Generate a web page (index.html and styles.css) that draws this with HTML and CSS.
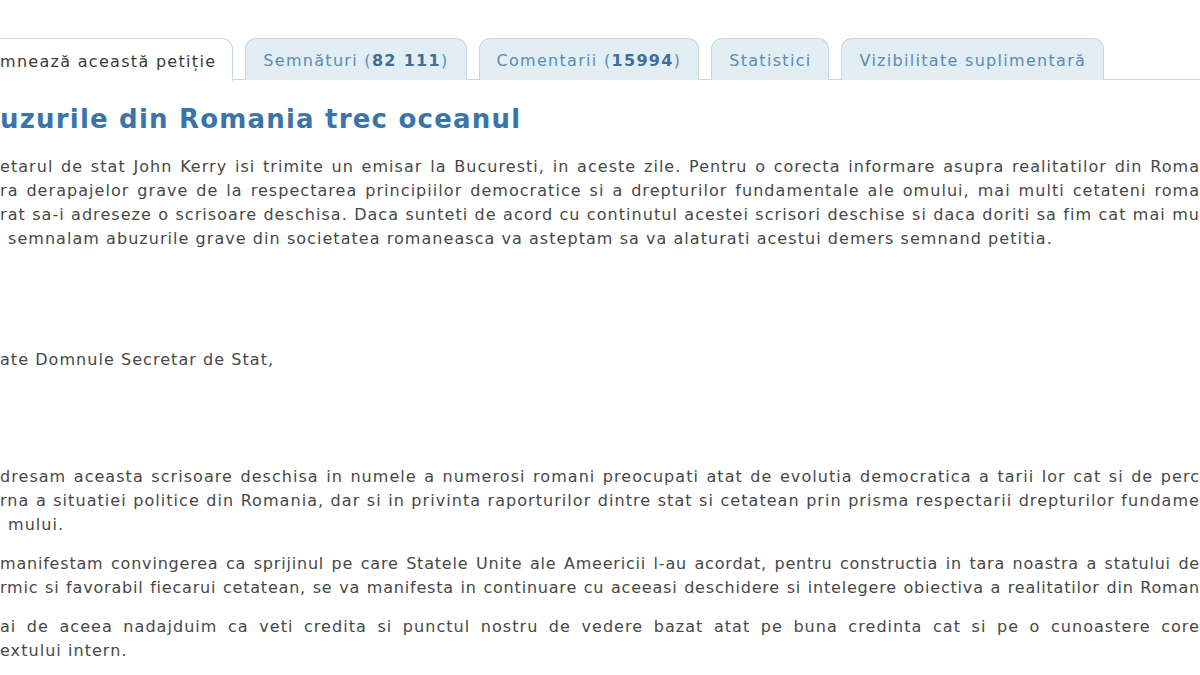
FILE: index.html
```html
<!DOCTYPE html>
<html lang="ro">
<head>
<meta charset="utf-8">
<title>Abuzurile din Romania trec oceanul</title>
<link rel="stylesheet" href="styles.css">
</head>
<body>
<div class="page">
  <nav class="tabs">
    <div class="tab active">mnează această petiție</div>
    <div class="tab">Semnături (<b>82 111</b>)</div>
    <div class="tab">Comentarii (<b>15994</b>)</div>
    <div class="tab">Statistici</div>
    <div class="tab">Vizibilitate suplimentară</div>
  </nav>
  <main class="content">
    <h1 class="title">uzurile din Romania trec oceanul</h1>
    <div class="para">
      <span class="ln">etarul de stat John Kerry isi trimite un emisar la Bucuresti, in aceste zile. Pentru o corecta informare asupra realitatilor din Roma</span>
      <span class="ln">ra derapajelor grave de la respectarea principiilor democratice si a drepturilor fundamentale ale omului, mai multi cetateni roma</span>
      <span class="ln">rat sa-i adreseze o scrisoare deschisa. Daca sunteti de acord cu continutul acestei scrisori deschise si daca doriti sa fim cat mai mu</span>
      <span class="ln end ind">semnalam abuzurile grave din societatea romaneasca va asteptam sa va alaturati acestui demers semnand petitia.</span>
    </div>
    <div class="para salut">
      <span class="ln end">ate Domnule Secretar de Stat,</span>
    </div>
    <div class="para letter">
      <span class="ln">dresam aceasta scrisoare deschisa in numele a numerosi romani preocupati atat de evolutia democratica a tarii lor cat si de perc</span>
      <span class="ln">rna a situatiei politice din Romania, dar si in privinta raporturilor dintre stat si cetatean prin prisma respectarii drepturilor fundame</span>
      <span class="ln end ind">mului.</span>
    </div>
    <div class="para">
      <span class="ln tight">manifestam convingerea ca sprijinul pe care Statele Unite ale Ameericii l-au acordat, pentru constructia in tara noastra a statului de</span>
      <span class="ln tight">rmic si favorabil fiecarui cetatean, se va manifesta in continuare cu aceeasi deschidere si intelegere obiectiva a realitatilor din Roman</span>
    </div>
    <div class="para">
      <span class="ln">ai de aceea nadajduim ca veti credita si punctul nostru de vedere bazat atat pe buna credinta cat si pe o cunoastere core</span>
      <span class="ln end">extului intern.</span>
    </div>
  </main>
</div>
</body>
</html>
```
FILE: styles.css
```css
html, body {
  margin: 0;
  padding: 0;
  background: #ffffff;
}
body {
  width: 1200px;
  height: 675px;
  overflow: hidden;
  font-family: "DejaVu Sans", Verdana, sans-serif;
}
.page {
  padding-top: 38px;
}
.tabs {
  display: flex;
  gap: 12px;
  height: 42px;
  border-bottom: 1px solid #c9d7e1;
  box-sizing: border-box;
}
.tab {
  box-sizing: border-box;
  height: 42px;
  padding: 2px 17px 0 17px;
  display: flex;
  align-items: center;
  font-size: 16px;
  letter-spacing: 1.3px;
  color: #5a8cb4;
  background: #e3edf4;
  border: 1px solid #c7d6e1;
  border-bottom: none;
  border-radius: 11px 11px 0 0;
}
.tab b {
  color: #3f6f98;
}
.tab.active {
  background: #ffffff;
  color: #3a3a3a;
  padding-left: 0;
  padding-right: 16px;
  border-left: none;
  border-radius: 0 11px 0 0;
  height: 43px;
  margin-bottom: -1px;
}
.content {
  color: #474747;
  font-size: 16px;
  letter-spacing: 1.05px;
  line-height: 24px;
}
.title {
  margin: 22px 0 19px 0;
  font-size: 26px;
  letter-spacing: 1.2px;
  line-height: 34px;
  font-weight: bold;
  color: #3b74a8;
}
.para {
  margin: 0 0 15px 0;
}
.ln {
  display: block;
  text-align: justify;
  text-align-last: justify;
  width: 1200px;
  white-space: nowrap;
}
.ln.tight {
  letter-spacing: 0.8px;
}
.ln.end {
  text-align-last: auto;
}
.ln.ind {
  padding-left: 8px;
}
.salut {
  margin-top: 97px;
}
.letter {
  margin-top: 93px;
}
```
